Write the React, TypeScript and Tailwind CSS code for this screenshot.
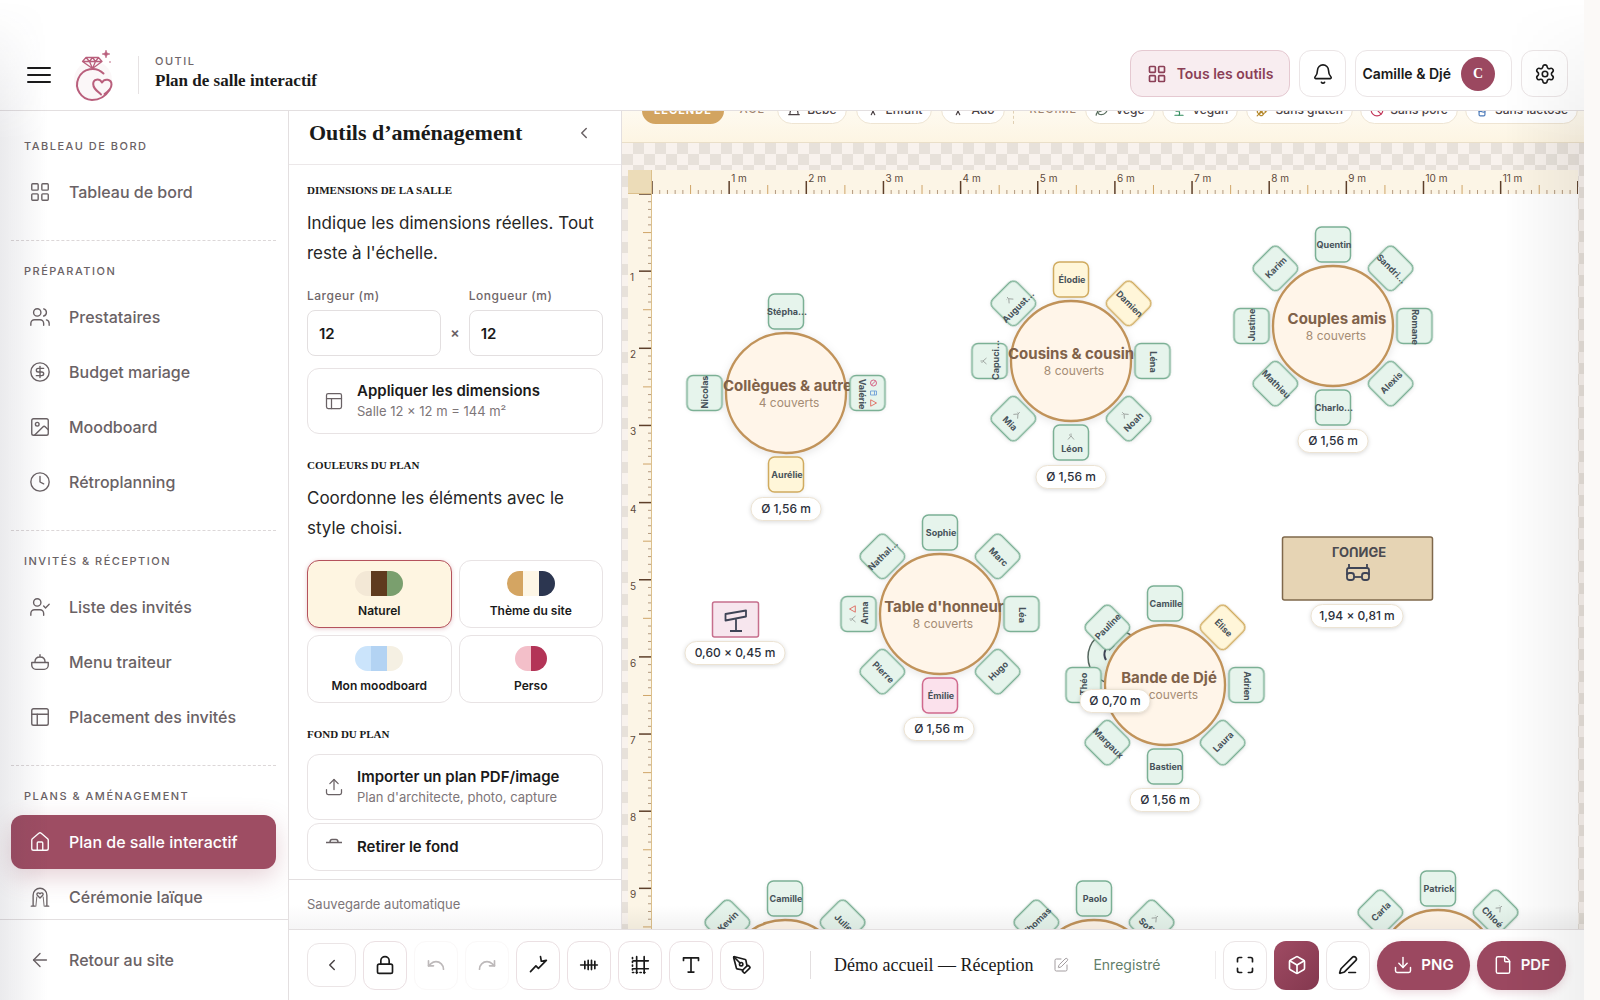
import type { ComponentType, ReactNode } from "react";
import {
  ArrowLeft,
  Ban,
  Bell,
  Box,
  ChevronLeft,
  CircleDollarSign,
  Clock,
  Download,
  File,
  House,
  Image,
  LayoutGrid,
  Leaf,
  Lock,
  Maximize,
  Milk,
  PanelsTopLeft,
  PenLine,
  PenTool,
  PersonStanding,
  Redo,
  Settings,
  Sprout,
  SquarePen,
  Undo,
  Upload,
  UserCheck,
  Users,
  Wheat,
} from "lucide-react";

type IconProps = { size?: number; strokeWidth?: number; className?: string };
type Icon = ComponentType<IconProps>;

const makeIcon =
  (children: ReactNode): Icon =>
  ({ size = 24, strokeWidth = 2, className }) => (
    <svg
      width={size}
      height={size}
      viewBox="0 0 24 24"
      fill="none"
      stroke="currentColor"
      strokeWidth={strokeWidth}
      strokeLinecap="round"
      strokeLinejoin="round"
      className={className}
      aria-hidden="true"
    >
      {children}
    </svg>
  );

const PotIcon = makeIcon(
  <>
    <path d="M3 12.500h18v3a4.500 4.500 0 0 1-4.500 4.500h-9A4.500 4.500 0 0 1 3 15.500z" />
    <path d="M6.500 12c0-4 2-5.500 5.500-5.500s5.500 1.500 5.500 5.500M12 6.500V4" />
  </>
);

const ArchIcon = makeIcon(
  <>
    <path d="M2.500 22h4M17.500 22h4M4.500 22V10a7.500 7.500 0 0 1 15 0v12" />
    <path d="M7.500 22 8.500 12M16.500 22l-1-10" strokeWidth="1" />
    <path d="M12 13 9 10c-1.200-1.700.9-3.600 3-1.600 2.100-2 4.200-.1 3 1.600z" />
  </>
);

const PathIcon = makeIcon(<path d="M3 20l6.500-7 3 3L22 6.500M15 2l1 5.500 6-1" />);

const TicksIcon = makeIcon(
  <path d="M2 12h20M7 7.500v9M11 6.500v11M15 6.500v11M19 7.500v9" />
);

const GridIcon = makeIcon(
  <>
    <path d="M8 2v20M17 2v20M4 7h18M4 16.500h18" />
    <path d="M3 3v18h18" strokeDasharray="1.500 3" />
  </>
);

const TextIcon = makeIcon(
  <path d="M3 6.500V3.500h18v3M12 3.500v17M8.500 20.500h7" />
);

const BabyIcon = makeIcon(<path d="M3 20h18M5 20c0-7 3-11 7-11s7 4 7 11" />);

type NavEntry = { label: string; icon: Icon; active?: boolean };

const NAV: { title: string; items: NavEntry[] }[] = [
  {
    title: "TABLEAU DE BORD",
    items: [{ label: "Tableau de bord", icon: LayoutGrid }],
  },
  {
    title: "PRÉPARATION",
    items: [
      { label: "Prestataires", icon: Users },
      { label: "Budget mariage", icon: CircleDollarSign },
      { label: "Moodboard", icon: Image },
      { label: "Rétroplanning", icon: Clock },
    ],
  },
  {
    title: "INVITÉS & RÉCEPTION",
    items: [
      { label: "Liste des invités", icon: UserCheck },
      { label: "Menu traiteur", icon: PotIcon },
      { label: "Placement des invités", icon: PanelsTopLeft },
    ],
  },
  {
    title: "PLANS & AMÉNAGEMENT",
    items: [
      { label: "Plan de salle interactif", icon: House, active: true },
      { label: "Cérémonie laïque", icon: ArchIcon },
    ],
  },
];

const PALETTES: { label: string; colors: string[]; active?: boolean }[] = [
  { label: "Naturel", colors: ["#f3e8d6", "#5f3b1e", "#7a9f6e"], active: true },
  { label: "Thème du site", colors: ["#d4a562", "#fdf6e6", "#2c3650"] },
  { label: "Mon moodboard", colors: ["#cbe4fb", "#b3d3f3", "#f5f0e3"] },
  { label: "Perso", colors: ["#f3bfc9", "#b33457"] },
];

const AGES: { label: string; icon: Icon }[] = [
  { label: "Bébé", icon: BabyIcon },
  { label: "Enfant", icon: PersonStanding },
  { label: "Ado", icon: PersonStanding },
];

const DIETS: { label: string; icon: Icon; color: string }[] = [
  { label: "Végé", icon: Leaf, color: "text-[#5b6f60]" },
  { label: "Vegan", icon: Sprout, color: "text-[#2f8a5b]" },
  { label: "Sans gluten", icon: Wheat, color: "text-[#b5892e]" },
  { label: "Sans porc", icon: Ban, color: "text-[#c2385a]" },
  { label: "Sans lactose", icon: Milk, color: "text-[#4a78b8]" },
];

type Mark = "person" | "alert" | "ban" | "milk";
type Seat = { name: string; tone?: "yellow" | "pink"; marks?: Mark[] };
type RoundTable = {
  name: string;
  count?: string;
  x: number;
  y: number;
  seats: (Seat | null)[];
  wide?: boolean;
};

// Seats run clockwise from the top, one every 45 degrees.
const TABLES: RoundTable[] = [
  {
    name: "Collègues & autres",
    count: "4 couverts",
    x: 134,
    y: 199,
    wide: true,
    seats: [
      { name: "Stépha…" },
      null,
      { name: "Valérie", marks: ["ban", "milk", "alert"] },
      null,
      { name: "Aurélie", tone: "yellow" },
      null,
      { name: "Nicolas" },
      null,
    ],
  },
  {
    name: "Cousins & cousines",
    count: "8 couverts",
    x: 419,
    y: 167,
    wide: true,
    seats: [
      { name: "Élodie", tone: "yellow" },
      { name: "Damien", tone: "yellow" },
      { name: "Léna" },
      { name: "Noah", marks: ["person"] },
      { name: "Léon", marks: ["person"] },
      { name: "Mia", marks: ["person"] },
      { name: "Capuci…", marks: ["person"] },
      { name: "August…", marks: ["person"] },
    ],
  },
  {
    name: "Couples amis",
    count: "8 couverts",
    x: 681,
    y: 132,
    seats: [
      { name: "Quentin" },
      { name: "Sandri…" },
      { name: "Romane" },
      { name: "Alexis" },
      { name: "Charlo…" },
      { name: "Mathieu" },
      { name: "Justine" },
      { name: "Karim" },
    ],
  },
  {
    name: "Table d'honneur",
    count: "8 couverts",
    x: 288,
    y: 420,
    seats: [
      { name: "Sophie" },
      { name: "Marc" },
      { name: "Léa" },
      { name: "Hugo" },
      { name: "Émilie", tone: "pink" },
      { name: "Pierre" },
      { name: "Anna", marks: ["person", "alert"] },
      { name: "Nathal…" },
    ],
  },
  {
    name: "Bande de Djé",
    count: "8 couverts",
    x: 513,
    y: 491,
    seats: [
      { name: "Camille" },
      { name: "Élise", tone: "yellow" },
      { name: "Adrien" },
      { name: "Laura" },
      { name: "Bastien" },
      { name: "Margaux" },
      { name: "Théo" },
      { name: "Pauline" },
    ],
  },
  {
    name: "",
    x: 133,
    y: 786,
    seats: [{ name: "Camille" }, { name: "Julie" }, null, null, null, null, null, { name: "Kevin" }],
  },
  {
    name: "",
    x: 442,
    y: 786,
    seats: [
      { name: "Paolo" },
      { name: "Sofia", marks: ["person"] },
      null,
      null,
      null,
      null,
      null,
      { name: "Thomas" },
    ],
  },
  {
    name: "",
    x: 786,
    y: 776,
    seats: [
      { name: "Patrick" },
      { name: "Chloé", marks: ["person"] },
      null,
      null,
      null,
      null,
      null,
      { name: "Carla" },
    ],
  },
];

const SIZE_TAGS = [
  { text: "Ø 1,56 m", x: 134, y: 315, w: 70 },
  { text: "Ø 1,56 m", x: 419, y: 283, w: 70 },
  { text: "Ø 1,56 m", x: 681, y: 247, w: 70 },
  { text: "Ø 1,56 m", x: 287, y: 535, w: 70 },
  { text: "Ø 1,56 m", x: 513, y: 606, w: 70 },
  { text: "Ø 0,70 m", x: 463, y: 507, w: 70 },
  { text: "0,60 × 0,45 m", x: 83, y: 459, w: 100 },
  { text: "1,94 × 0,81 m", x: 705, y: 422, w: 92 },
];

const METRE = 77.15;
const SEAT_TEXT_ANGLES = [0, 45, 90, -45, 0, 45, -90, -45];
const SEAT_TONES = {
  green: { fill: "#e6f4ec", stroke: "#7bb095" },
  yellow: { fill: "#fff6d9", stroke: "#d0ab5f" },
  pink: { fill: "#fbe1ec", stroke: "#d0698d" },
};

function Logo() {
  return (
    <svg width="44" height="54" viewBox="0 0 44 54" fill="none" stroke="#b95f7c" aria-hidden="true">
      <circle cx="21" cy="32" r="19" fill="#b95f7c" opacity="0.05" stroke="none" />
      <g strokeWidth="2" strokeLinecap="round" strokeLinejoin="round">
        <path d="M31.500 25.500A15.500 15.500 0 1 0 20 52C28 52 34 47.500 37.500 42" />
        <path d="M29 46.500C24 42 21.200 40 21.200 36c0-5 6-6 8.800-1.500C32.500 30 39.500 31 39.500 36.500c0 4-4 7.500-7 9.500" />
      </g>
      <path
        d="M14 9.500h12.500l3.500 4L20.500 20.500 10.500 13.500zM10.500 13.500H30M14 9.500l3.500 4 3 7 3-7 3-4M17.500 13.500l3-4 3 4"
        strokeWidth="1.300"
        strokeLinejoin="round"
      />
      <path d="M34 2l1 3 3 1-3 1-1 3-1-3-3-1 3-1z" fill="#b95f7c" strokeWidth="0.500" />
      <circle cx="38" cy="14" r="0.800" fill="#b95f7c" stroke="none" />
    </svg>
  );
}

function Header() {
  return (
    <header className="flex h-[111px] shrink-0 items-end justify-between border-b border-[#e3dfe0] bg-white pr-4 pb-2 pl-[26px]">
      <div className="flex items-center">
        <button type="button" aria-label="Menu" className="text-[#1a1a1a]">
          <svg
            width="26"
            height="18"
            viewBox="0 0 26 18"
            stroke="currentColor"
            strokeWidth="2"
            strokeLinecap="round"
            className="block"
            aria-hidden="true"
          >
            <path d="M2 2h22M2 9h22M2 16h22" />
          </svg>
        </button>
        <div className="ml-5">
          <Logo />
        </div>
        <div className="ml-[22px] h-[38px] border-l border-[#e6e2e3]" />
        <div className="ml-4 pb-1">
          <div className="text-[11px] leading-4 font-medium tracking-[1.500px] text-[#6f6669]">OUTIL</div>
          <h1 className="font-[Liberation_Serif,serif] text-[17px] leading-6 font-semibold text-[#1a1a1a]">
            Plan de salle interactif
          </h1>
        </div>
      </div>
      <div className="mb-[5px] flex items-center gap-[9px] text-sm">
        <button
          type="button"
          className="flex h-[47px] items-center gap-[10px] rounded-xl border border-[#e5c9d1] bg-[#f8edf0] px-4 font-semibold text-[#8b3f56]"
        >
          <LayoutGrid size={20} strokeWidth={2} />
          Tous les outils
        </button>
        <button
          type="button"
          aria-label="Notifications"
          className="flex size-[47px] items-center justify-center rounded-xl border border-[#ebe5e6]"
        >
          <Bell size={22} strokeWidth={1.75} />
        </button>
        <button
          type="button"
          className="flex h-[47px] items-center gap-[10px] rounded-xl border border-[#ebe5e6] pr-4 pl-[6px] font-semibold"
        >
          Camille &amp; Djé
          <span className="flex size-[34px] items-center justify-center rounded-full bg-[#9b4860] font-[Liberation_Serif,serif] text-white">
            C
          </span>
        </button>
        <button
          type="button"
          aria-label="Paramètres"
          className="flex size-[47px] items-center justify-center rounded-xl border border-[#ebe5e6]"
        >
          <Settings size={22} strokeWidth={1.75} />
        </button>
      </div>
    </header>
  );
}

function Sidebar() {
  return (
    <aside className="flex w-[289px] shrink-0 flex-col border-r border-[#e3dfe0] text-base font-medium text-[#6a6265]">
      <nav className="min-h-0 flex-1 overflow-hidden pt-[5px]">
        {NAV.map((section) => (
          <section
            key={section.title}
            className="mr-3 ml-[11px] border-b border-dashed border-[#dcd7d8] pt-[22px] pb-[21px] last:border-b-0"
          >
            <h2 className="mb-[11px] pl-[13px] text-[11px] leading-4 font-medium tracking-[1.500px]">
              {section.title}
            </h2>
            <div className="flex flex-col gap-px">
              {section.items.map(({ label, icon: ItemIcon, active }) => (
                <a
                  key={label}
                  href="#"
                  className={`flex h-[54px] shrink-0 items-center gap-[18px] rounded-xl pl-[18px] ${
                    active ? "bg-[#9e4d63] text-white shadow-[0_8px_24px_rgba(155,75,97,0.25)]" : ""
                  }`}
                >
                  <ItemIcon size={22} strokeWidth={1.5} />
                  {label}
                </a>
              ))}
            </div>
          </section>
        ))}
      </nav>
      <div className="flex h-[81px] shrink-0 items-center border-t border-[#e3dfe0] pl-[29px]">
        <a href="#" className="flex items-center gap-[18px]">
          <ArrowLeft size={22} strokeWidth={1.5} />
          Retour au site
        </a>
      </div>
    </aside>
  );
}

function SectionTitle({ children }: { children: ReactNode }) {
  return (
    <h3 className="font-[Liberation_Serif,serif] text-[11px] leading-4 font-semibold text-[#1a1a1a]">{children}</h3>
  );
}

function ActionCard({ icon: CardIcon, title, hint }: { icon: Icon; title: string; hint: string }) {
  return (
    <button
      type="button"
      className="flex h-[66px] w-full items-center gap-[13px] rounded-xl border border-[#e8e3e4] pl-4 text-left"
    >
      <CardIcon size={20} strokeWidth={1.5} className="text-[#6a6265]" />
      <span>
        <span className="block text-[15px] leading-5 font-semibold text-[#1a1a1a]">{title}</span>
        <span className="block text-[13px] leading-5 text-[#7d7578]">{hint}</span>
      </span>
    </button>
  );
}

function DimensionField({ id, label }: { id: string; label: string }) {
  return (
    <div className="min-w-0 flex-1">
      <label htmlFor={id} className="block text-xs leading-4 font-medium tracking-[0.500px] text-[#6f6669]">
        {label}
      </label>
      <input
        id={id}
        type="text"
        defaultValue="12"
        className="mt-[6px] block h-[46px] w-full rounded-lg border border-[#e3dfe0] px-[11px] text-[15px] font-semibold text-[#1a1a1a]"
      />
    </div>
  );
}

function ToolsPanel() {
  return (
    <section className="flex w-[333px] shrink-0 flex-col border-r border-[#e3dfe0]">
      <div className="flex h-[54px] shrink-0 items-start justify-between border-b border-[#ece8e9] pt-[6px] pr-[28px] pl-5">
        <h2 className="font-[Liberation_Serif,serif] text-[22px] leading-8 font-semibold text-[#1a1a1a]">
          Outils d’aménagement
        </h2>
        <button type="button" aria-label="Replier" className="flex h-8 items-center text-[#6a6265]">
          <ChevronLeft size={18} strokeWidth={2} />
        </button>
      </div>
      <div className="min-h-0 flex-1 overflow-hidden px-[18px] pt-[17px]">
        <SectionTitle>DIMENSIONS DE LA SALLE</SectionTitle>
        <p className="mt-[10px] text-[17px] leading-[30px] text-[#262626]">
          Indique les dimensions réelles. Tout reste à l'échelle.
        </p>
        <div className="mt-5 flex items-end gap-[9px]">
          <DimensionField id="largeur" label="Largeur (m)" />
          <span className="pb-3 text-sm leading-[22px] font-semibold text-[#6a6265]">×</span>
          <DimensionField id="longueur" label="Longueur (m)" />
        </div>
        <div className="mt-[12px]">
          <ActionCard icon={PanelsTopLeft} title="Appliquer les dimensions" hint="Salle 12 × 12 m = 144 m²" />
        </div>

        <div className="mt-[23px]">
          <SectionTitle>COULEURS DU PLAN</SectionTitle>
          <p className="mt-[10px] text-[17px] leading-[30px] text-[#262626]">
            Coordonne les éléments avec le style choisi.
          </p>
          <div className="mt-[17px] grid grid-cols-2 gap-[7px]">
            {PALETTES.map((palette) => (
              <button
                key={palette.label}
                type="button"
                className={`flex h-[68px] flex-col items-center rounded-xl border pt-[10px] text-xs font-semibold text-[#1a1a1a] ${
                  palette.active
                    ? "border-[#b4525c] bg-[#fef5e1] shadow-[0_1px_4px_rgba(180,82,92,0.3)]"
                    : "border-[#e8e3e4]"
                }`}
              >
                <span className="flex overflow-hidden rounded-full">
                  {palette.colors.map((color) => (
                    <span key={color} className="h-[25px] w-4" style={{ backgroundColor: color }} />
                  ))}
                </span>
                <span className="mt-[7px] leading-4">{palette.label}</span>
              </button>
            ))}
          </div>
        </div>

        <div className="mt-[23px]">
          <SectionTitle>FOND DU PLAN</SectionTitle>
          <div className="mt-3 flex flex-col gap-[3px]">
            <ActionCard icon={Upload} title="Importer un plan PDF/image" hint="Plan d'architecte, photo, capture" />
            <button
              type="button"
              className="flex h-12 w-full items-center gap-[13px] rounded-xl border border-[#e8e3e4] pl-4 text-[15px] font-semibold text-[#1a1a1a]"
            >
              <svg
                width="20"
                height="20"
                viewBox="0 0 20 20"
                fill="none"
                stroke="#6a6265"
                strokeWidth="1.500"
                aria-hidden="true"
              >
                <path d="M2 5.500h16M6 5.500c0-2 .5-3 2-3h4c1.500 0 2 1 2 3" />
              </svg>
              Retirer le fond
            </button>
          </div>
        </div>
      </div>
      <div className="flex h-[50px] shrink-0 items-center border-t border-[#e3dfe0] bg-gradient-to-b from-white from-50% to-[#f6f5f6] pl-[18px] text-[13px] text-[#7d7578]">
        Sauvegarde automatique
      </div>
    </section>
  );
}

function Chip({ icon: ChipIcon, label, color }: { icon: Icon; label: string; color?: string }) {
  return (
    <span className="flex h-[29px] shrink-0 items-center gap-[6px] rounded-full border border-[#efe5d3] bg-white px-[9px] font-medium text-[#4a4144]">
      <ChipIcon size={14} strokeWidth={2} className={color} />
      {label}
    </span>
  );
}

function Legend() {
  return (
    <div className="flex h-[32px] shrink-0 items-end overflow-hidden border-b border-[#eadfc8] bg-gradient-to-b from-[#fefaf0] to-[#fdf5e3] pr-[6px] pb-[18px] pl-[20px] text-xs">
      <span className="flex h-[27px] shrink-0 items-center rounded-full bg-[#d2a461] px-3 text-[11px] font-bold tracking-[1px] text-white">
        LÉGENDE
      </span>
      <span className="ml-4 flex h-[29px] items-center text-[11px] font-medium tracking-[1px] text-[#a08470]">ÂGE</span>
      <div className="ml-3 flex gap-[9px]">
        {AGES.map((age) => (
          <Chip key={age.label} {...age} />
        ))}
      </div>
      <span className="ml-2 h-[29px] border-l border-dashed border-[#e0d0b4]" />
      <span className="ml-4 flex h-[29px] items-center text-[11px] font-medium tracking-[1px] text-[#a08470]">
        RÉGIME
      </span>
      <div className="ml-2 flex flex-1 justify-between">
        {DIETS.map((diet) => (
          <Chip key={diet.label} {...diet} />
        ))}
      </div>
    </div>
  );
}

const TICKS = Array.from({ length: 121 }, (_, i) => i);

function HorizontalRuler() {
  return (
    <svg height="24" className="block min-w-0 flex-1 bg-[#fcf5e6]" aria-hidden="true">
      {TICKS.map((i) => {
        const x = (i / 10) * METRE;
        const major = i % 10 === 0;
        const half = i % 5 === 0;
        return (
          <g key={i}>
            <path
              d={`M${x} 24V${major ? 11 : half ? 15 : 20}`}
              stroke={major ? "#5d3f2a" : half ? "#cfa568" : "#b39a80"}
              strokeWidth={major ? 1.5 : 1}
            />
            {major && i > 0 && i < 120 && (
              <text x={x + 2} y="12" fontSize="10" fill="#5d4a3c">
                {i / 10} m
              </text>
            )}
          </g>
        );
      })}
    </svg>
  );
}

function VerticalRuler() {
  return (
    <svg width="24" className="block h-full shrink-0 border-r border-[#dcc08c] bg-[#fcf5e6]" aria-hidden="true">
      {TICKS.map((i) => {
        const y = (i / 10) * METRE;
        const major = i % 10 === 0;
        const half = i % 5 === 0;
        return (
          <g key={i}>
            <path
              d={`M24 ${y}H${major ? 11 : half ? 15 : 20}`}
              stroke={major ? "#5d3f2a" : half ? "#cfa568" : "#b39a80"}
              strokeWidth={major ? 1.5 : 1}
            />
            {major && i > 0 && (
              <text x="2" y={y + 10} fontSize="10" fill="#5d4a3c">
                {i / 10}
              </text>
            )}
          </g>
        );
      })}
    </svg>
  );
}

function SeatMark({ mark, x }: { mark: Mark; x: number }) {
  const shapes = {
    person: <path d="M0 -3v2.500M-3 3L0 -.5 3 3M-2 -1.500h1" stroke="#9a9f9c" />,
    alert: <path d="M0 -3L3.200 2.800H-3.200z" stroke="#e0685c" />,
    ban: (
      <g stroke="#d4547a">
        <circle r="3" />
        <path d="M-2 -2L2 2" />
      </g>
    ),
    milk: <path d="M-2 -3H2V3H-2zM-2 -1H2" stroke="#6f9fd8" />,
  };
  return (
    <g transform={`translate(${x} -6)`} fill="none" strokeWidth="0.900">
      {shapes[mark]}
    </g>
  );
}

function SeatShape({ seat, index }: { seat: Seat; index: number }) {
  const angle = (index * Math.PI) / 4;
  const tone = SEAT_TONES[seat.tone ?? "green"];
  const marks = seat.marks ?? [];
  return (
    <g
      transform={`translate(${81.5 * Math.sin(angle)} ${-81.5 * Math.cos(angle)}) rotate(${SEAT_TEXT_ANGLES[index]})`}
    >
      <rect
        x="-17.500"
        y="-17.500"
        width="35"
        height="35"
        rx="6"
        fill={tone.fill}
        stroke={tone.stroke}
        strokeWidth="1.500"
        className="drop-shadow-[0_1px_2px_rgba(0,0,0,0.08)]"
      />
      {marks.map((mark, i) => (
        <SeatMark key={mark} mark={mark} x={(i - (marks.length - 1) / 2) * 10} />
      ))}
      <text x="1" y={marks.length ? 9 : 3} textAnchor="middle" fontSize="9" fontWeight="700" fill="#47525a">
        {seat.name}
      </text>
    </g>
  );
}

function TableShape({ table }: { table: RoundTable }) {
  return (
    <g transform={`translate(${table.x} ${table.y})`}>
      <circle
        r="60"
        fill="#fff5e9"
        stroke="#c1935a"
        strokeWidth="2.300"
        className="drop-shadow-[0_2px_4px_rgba(0,0,0,0.1)]"
      />
      <text
        x={table.wide ? -63 : 4}
        y="-2"
        textAnchor={table.wide ? "start" : "middle"}
        fontSize="15"
        fontWeight="700"
        fill="#80624a"
      >
        {table.name}
      </text>
      <text x="3" y="14" textAnchor="middle" fontSize="12" fill="#a58c74">
        {table.count}
      </text>
      {table.seats.map((seat, i) => seat && <SeatShape key={seat.name} seat={seat} index={i} />)}
    </g>
  );
}

function RoomPlan() {
  return (
    <svg className="block h-full min-w-0 flex-1 bg-white" role="img" aria-label="Plan de la salle">
      {/* panneau d'accueil */}
      <rect x="60.500" y="408" width="46" height="35" rx="2" fill="#f7e6ee" stroke="#c66f8d" strokeWidth="1.500" />
      <path
        d="M73.500 420l20.500-3.500v6l-20.500 4zM84 424v13M78 437h12"
        fill="none"
        stroke="#3e4456"
        strokeWidth="1.800"
        strokeLinejoin="round"
      />

      {/* lounge */}
      <rect x="630.500" y="343" width="150" height="63" rx="2" fill="#e6d4b4" stroke="#7f684b" strokeWidth="1.500" />
      <g transform="translate(707 358) scale(1 -1)">
        <text y="5" textAnchor="middle" fontSize="13" fontWeight="700" fill="#4a4a50">
          LOUNGE
        </text>
      </g>
      <g fill="none" stroke="#3e4456" strokeWidth="1.800" strokeLinejoin="round">
        <path d="M697 370v4M715 370v4M695 381v-5q0-2 2-2h18q2 0 2 2v5" />
        <rect x="695" y="379" width="7" height="7" rx="2.500" />
        <rect x="710" y="379" width="7" height="7" rx="2.500" />
        <path d="M702 383h8" />
      </g>

      {/* petite table ronde */}
      <circle cx="463" cy="463" r="27" fill="#e6f4ec" stroke="#56675f" strokeWidth="1.500" />
      <path d="M454 466c-4-7 0-14 7-18M457 456l5-5" fill="none" stroke="#3e4456" strokeWidth="2" />

      {TABLES.map((table) => (
        <TableShape key={`${table.x}-${table.y}`} table={table} />
      ))}

      {SIZE_TAGS.map((tag) => (
        <g key={`${tag.x}-${tag.y}`} transform={`translate(${tag.x} ${tag.y})`}>
          <rect
            x={-tag.w / 2}
            y="-11.500"
            width={tag.w}
            height="23"
            rx="11.500"
            fill="#fff"
            stroke="#ece3d3"
            className="drop-shadow-[0_1px_2px_rgba(0,0,0,0.15)]"
          />
          <text y="4" textAnchor="middle" fontSize="12" fontWeight="500" fill="#2b2f3a">
            {tag.text}
          </text>
        </g>
      ))}
    </svg>
  );
}

function PlanCanvas() {
  return (
    <section className="relative flex min-w-0 flex-1 flex-col overflow-hidden">
      <Legend />
      <div className="flex min-h-0 flex-1 flex-col bg-[repeating-conic-gradient(#e7e1da_0_25%,#f8f2ed_0_50%)] bg-[size:22px_22px] pt-[27px] pr-[6px] pl-[6px]">
        <div className="flex shrink-0">
          <div className="size-6 shrink-0 border-r border-b border-[#dcc08c] bg-[#ecdcb8]" />
          <HorizontalRuler />
        </div>
        <div className="flex min-h-0 flex-1 overflow-hidden">
          <VerticalRuler />
          <RoomPlan />
        </div>
      </div>
      <div className="pointer-events-none absolute inset-x-0 bottom-0 h-6 bg-gradient-to-t from-black/5 to-transparent" />
    </section>
  );
}

const TOOLS: { label: string; icon: Icon; disabled?: boolean }[] = [
  { label: "Verrouiller", icon: Lock },
  { label: "Annuler", icon: Undo, disabled: true },
  { label: "Rétablir", icon: Redo, disabled: true },
  { label: "Tracé", icon: PathIcon },
  { label: "Mesures", icon: TicksIcon },
  { label: "Grille", icon: GridIcon },
  { label: "Texte", icon: TextIcon },
  { label: "Dessin", icon: PenTool },
];

function Toolbar() {
  return (
    <div className="flex h-[71px] shrink-0 items-center border-t border-[#e3dfe0] px-[18px] text-[#1a1a1a]">
      <div className="flex items-center gap-[7px]">
        <button
          type="button"
          aria-label="Replier la barre"
          className="flex h-11 w-[49px] items-center justify-center rounded-xl border border-[#ebe5e6] text-[#4a4446]"
        >
          <ChevronLeft size={18} strokeWidth={2} />
        </button>
        {TOOLS.map(({ label, icon: ToolIcon, disabled }) => (
          <button
            key={label}
            type="button"
            aria-label={label}
            disabled={disabled}
            className={`flex h-[49px] w-11 items-center justify-center rounded-xl border ${
              disabled ? "border-[#faf8f8] text-[#bdb9ba]" : "border-[#ebe0e3]"
            }`}
          >
            <ToolIcon size={20} strokeWidth={2} />
          </button>
        ))}
      </div>
      <div className="ml-[46px] h-7 border-l border-[#e3dfe0]" />
      <h2 className="ml-[23px] font-[Liberation_Serif,serif] text-lg leading-6 text-[#1a1a1a]">
        Démo accueil — Réception
      </h2>
      <button type="button" aria-label="Renommer" className="ml-5 text-[#a39da0]">
        <SquarePen size={16} strokeWidth={1.5} />
      </button>
      <span className="ml-6 text-sm text-[#64806a]">Enregistré</span>
      <div className="ml-auto h-7 border-l border-[#efeced]" />
      <div className="ml-[7px] flex items-center gap-[7px]">
        <button
          type="button"
          aria-label="Plein écran"
          className="flex h-[49px] w-11 items-center justify-center rounded-xl border border-[#ebe5e6]"
        >
          <Maximize size={20} strokeWidth={2} />
        </button>
        <button
          type="button"
          aria-label="Vue 3D"
          className="flex h-[49px] w-[45px] items-center justify-center rounded-xl bg-gradient-to-br from-[#9f4b63] to-[#84384f] text-white"
        >
          <Box size={20} strokeWidth={2} />
        </button>
        <button
          type="button"
          aria-label="Annoter"
          className="flex h-[49px] w-11 items-center justify-center rounded-xl border border-[#ebe5e6]"
        >
          <PenLine size={20} strokeWidth={2} />
        </button>
        <button
          type="button"
          className="flex h-[49px] items-center gap-2 rounded-full bg-[#9b4860] px-4 text-[15px] font-semibold text-white shadow-[0_3px_8px_rgba(155,72,96,0.2)]"
        >
          <Download size={20} strokeWidth={1.75} />
          PNG
        </button>
        <button
          type="button"
          className="flex h-[49px] items-center gap-2 rounded-full bg-[#9b4860] px-4 text-[15px] font-semibold text-white shadow-[0_3px_8px_rgba(155,72,96,0.2)]"
        >
          <File size={20} strokeWidth={1.75} />
          PDF
        </button>
      </div>
    </div>
  );
}

export default function App() {
  return (
    <div className="flex h-screen bg-[#fbf9f7] font-[Inter,sans-serif] text-[#1a1a1a]">
      <div className="relative mr-4 flex min-w-0 flex-1 flex-col overflow-hidden bg-white">
        <Header />
        <div className="flex min-h-0 flex-1">
          <Sidebar />
          <div className="flex min-w-0 flex-1 flex-col">
            <div className="flex min-h-0 flex-1">
              <ToolsPanel />
              <PlanCanvas />
            </div>
            <Toolbar />
          </div>
        </div>
        <div className="pointer-events-none absolute inset-y-0 left-0 w-12 bg-gradient-to-r from-[#30304a]/10 to-transparent [mask-image:linear-gradient(to_bottom,transparent,black_140px)]" />
        <div className="pointer-events-none absolute inset-y-0 right-0 w-20 bg-gradient-to-l from-black/6 to-transparent [mask-image:linear-gradient(to_bottom,transparent,black_140px)]" />
      </div>
    </div>
  );
}
